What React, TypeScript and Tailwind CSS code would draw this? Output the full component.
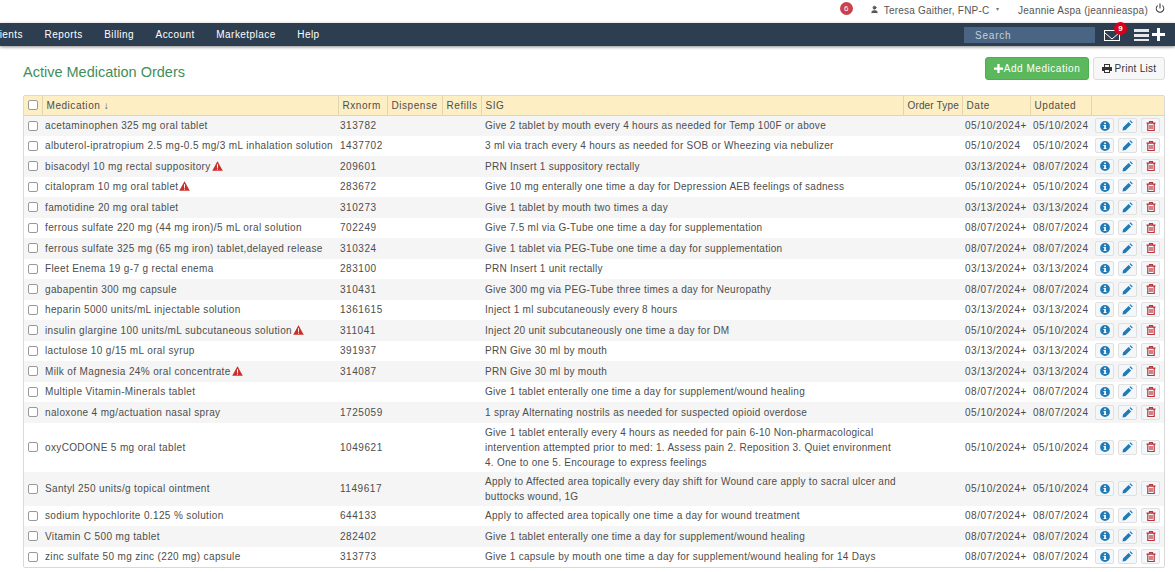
import { Power, User } from 'lucide-react'

const ROWS = [
  { name: 'acetaminophen 325 mg oral tablet', rx: '313782', sig: 'Give 2 tablet by mouth every 4 hours as needed for Temp 100F or above', date: '05/10/2024+', updated: '05/10/2024' },
  { name: 'albuterol-ipratropium 2.5 mg-0.5 mg/3 mL inhalation solution', rx: '1437702', sig: '3 ml via trach every 4 hours as needed for SOB or Wheezing via nebulizer', date: '05/10/2024', updated: '05/10/2024' },
  { name: 'bisacodyl 10 mg rectal suppository', warn: true, rx: '209601', sig: 'PRN Insert 1 suppository rectally', date: '03/13/2024+', updated: '08/07/2024' },
  { name: 'citalopram 10 mg oral tablet', warn: true, rx: '283672', sig: 'Give 10 mg enterally one time a day for Depression AEB feelings of sadness', date: '05/10/2024+', updated: '05/10/2024' },
  { name: 'famotidine 20 mg oral tablet', rx: '310273', sig: 'Give 1 tablet by mouth two times a day', date: '03/13/2024+', updated: '03/13/2024' },
  { name: 'ferrous sulfate 220 mg (44 mg iron)/5 mL oral solution', rx: '702249', sig: 'Give 7.5 ml via G-Tube one time a day for supplementation', date: '08/07/2024+', updated: '08/07/2024' },
  { name: 'ferrous sulfate 325 mg (65 mg iron) tablet,delayed release', rx: '310324', sig: 'Give 1 tablet via PEG-Tube one time a day for supplementation', date: '08/07/2024+', updated: '08/07/2024' },
  { name: 'Fleet Enema 19 g-7 g rectal enema', rx: '283100', sig: 'PRN Insert 1 unit rectally', date: '03/13/2024+', updated: '03/13/2024' },
  { name: 'gabapentin 300 mg capsule', rx: '310431', sig: 'Give 300 mg via PEG-Tube three times a day for Neuropathy', date: '08/07/2024+', updated: '08/07/2024' },
  { name: 'heparin 5000 units/mL injectable solution', rx: '1361615', sig: 'Inject 1 ml subcutaneously every 8 hours', date: '03/13/2024+', updated: '03/13/2024' },
  { name: 'insulin glargine 100 units/mL subcutaneous solution', warn: true, rx: '311041', sig: 'Inject 20 unit subcutaneously one time a day for DM', date: '05/10/2024+', updated: '05/10/2024' },
  { name: 'lactulose 10 g/15 mL oral syrup', rx: '391937', sig: 'PRN Give 30 ml by mouth', date: '03/13/2024+', updated: '03/13/2024' },
  { name: 'Milk of Magnesia 24% oral concentrate', warn: true, rx: '314087', sig: 'PRN Give 30 ml by mouth', date: '03/13/2024+', updated: '03/13/2024' },
  { name: 'Multiple Vitamin-Minerals tablet', rx: '', sig: 'Give 1 tablet enterally one time a day for supplement/wound healing', date: '08/07/2024+', updated: '08/07/2024' },
  { name: 'naloxone 4 mg/actuation nasal spray', rx: '1725059', sig: '1 spray Alternating nostrils as needed for suspected opioid overdose', date: '05/10/2024+', updated: '08/07/2024' },
  { name: 'oxyCODONE 5 mg oral tablet', rx: '1049621', sig: 'Give 1 tablet enterally every 4 hours as needed for pain 6-10 Non-pharmacological intervention attempted prior to med: 1. Assess pain 2. Reposition 3. Quiet environment 4. One to one 5. Encourage to express feelings', date: '05/10/2024+', updated: '05/10/2024' },
  { name: 'Santyl 250 units/g topical ointment', rx: '1149617', sig: 'Apply to Affected area topically every day shift for Wound care apply to sacral ulcer and buttocks wound, 1G', date: '05/10/2024+', updated: '05/10/2024' },
  { name: 'sodium hypochlorite 0.125 % solution', rx: '644133', sig: 'Apply to affected area topically one time a day for wound treatment', date: '08/07/2024+', updated: '08/07/2024' },
  { name: 'Vitamin C 500 mg tablet', rx: '282402', sig: 'Give 1 tablet enterally one time a day for supplement/wound healing', date: '08/07/2024+', updated: '08/07/2024' },
  { name: 'zinc sulfate 50 mg zinc (220 mg) capsule', rx: '313773', sig: 'Give 1 capsule by mouth one time a day for supplement/wound healing for 14 Days', date: '08/07/2024+', updated: '08/07/2024' },
]

const NAV = ['Reports', 'Billing', 'Account', 'Marketplace', 'Help']

function Check() {
  return <span className="block w-[10px] h-[10px] rounded-[2px] border border-[#999] bg-white" />
}

function Warn() {
  return (
    <svg width="11" height="10" viewBox="0 0 11 10" className="inline-block ml-[1px] align-[-1px]">
      <path d="M5.5 0.3 L10.8 9.7 H0.2 Z" fill="#c9302c" />
      <rect x="5" y="3.2" width="1" height="3.6" fill="#fff" />
      <rect x="5" y="7.6" width="1" height="1.1" fill="#fff" />
    </svg>
  )
}

function ActionBtn({ children }: { children: React.ReactNode }) {
  return (
    <span className="flex items-center justify-center w-[19px] h-[15px] rounded-[2px] border border-[#e0e0e0] bg-[#f4f7f9]">
      {children}
    </span>
  )
}

function Actions() {
  return (
    <div className="flex gap-[4px] pl-[1px]">
      <ActionBtn>
        <svg width="10" height="10" viewBox="0 0 10 10">
          <circle cx="5" cy="5" r="4.9" fill="#1f7ab5" />
          <rect x="4.2" y="1.6" width="1.7" height="1.5" fill="#fff" />
          <path d="M3.5 4h2.4v3.2h.7v.9h-3.1v-.9h.7V4.9h-.7z" fill="#fff" />
        </svg>
      </ActionBtn>
      <ActionBtn>
        <svg width="11" height="11" viewBox="0 0 11 11">
          <path d="M0.5 10.5 L1 7.5 L6.6 1.9 L9.1 4.4 L3.5 10 Z M7.5 1 L8.4 0.3 L10.7 2.6 L10 3.5 Z" fill="#1f7ab5" />
        </svg>
      </ActionBtn>
      <ActionBtn>
        <svg width="10" height="10" viewBox="0 0 10 10" fill="none" stroke="#b8333a" strokeWidth="1.2">
          <path d="M0.5 2.2h9M3.5 2V.7h3V2M1.8 2.5v7h6.4v-7M4 4v4M6 4v4" />
        </svg>
      </ActionBtn>
    </div>
  )
}

export default function App() {
  return (
    <div className="w-[1175px] h-[572px] overflow-hidden bg-white font-['Liberation_Sans',Arial,sans-serif] text-[10px] tracking-[0.55px] text-[#4d4d4d]">
      {/* Top bar */}
      <div className="h-[23px] flex items-start pt-[2px] justify-end text-[#555]">
        <span className="flex items-center justify-center w-[13px] h-[13px] rounded-full bg-[#c9424f] text-white text-[8px] tracking-normal mr-[17px]">6</span>
        <User size={9} fill="#555" className="mr-[5px] mt-[3px]" />
        <span className="tracking-[0.22px] mt-[1px]">Teresa Gaither, FNP-C</span>
        <span className="ml-[6px] mr-[19px] mt-[3px] text-[6px] text-[#777]">▾</span>
        <span className="mt-[1px] tracking-[0.25px]">Jeannie Aspa (jeannieaspa)</span>
        <Power size={10} strokeWidth={2.5} className="ml-[7px] mr-[10px] mt-[1px] text-[#333]" />
      </div>

      {/* Nav */}
      <div className="h-[23px] flex items-center bg-[#2c3e50] text-white shadow-[0_1px_3px_rgba(0,0,0,0.45)] relative tracking-[0.45px]">
        <span className="w-[23px] overflow-hidden flex justify-end shrink-0">ients</span>
        {NAV.map((n) => (
          <span key={n} className="ml-[21.5px]">{n}</span>
        ))}
        <div className="ml-auto flex items-center">
          <div className="w-[131px] h-[16px] mt-[1px] bg-[#4a6583] text-[#c4d0dc] pl-[11px] flex items-center tracking-[0.8px]">Search</div>
          <div className="relative ml-[9px] mt-[2px] w-[16px] h-[11px] border border-white bg-[#2c3e50]">
            <svg width="14" height="9" viewBox="0 0 14 9" className="block"><path d="M0 2 L7 8 L14 2" fill="none" stroke="#fff" /></svg>
            <span className="absolute -top-[9px] left-[9px] flex items-center justify-center w-[13px] h-[13px] rounded-full bg-[#d9001b] text-white text-[8px] font-bold tracking-normal">9</span>
          </div>
          <div className="ml-[14px] flex flex-col gap-[2px]">
            <span className="block w-[15px] h-[3px] bg-[#e8e8e8]" />
            <span className="block w-[15px] h-[3px] bg-[#e8e8e8]" />
            <span className="block w-[15px] h-[2px] bg-[#e8e8e8]" />
          </div>
          <svg width="13" height="13" viewBox="0 0 13 13" className="ml-[3px] mr-[10px]"><path d="M5 0h3v5h5v3H8v5H5V8H0V5h5z" fill="#fff" /></svg>
        </div>
      </div>

      {/* Heading */}
      <div className="h-[49px] flex items-center pl-[23px] pr-[10px]">
        <h1 className="text-[14.5px] tracking-normal font-normal text-[#3f8f5a] mt-[5px]">Active Medication Orders</h1>
        <div className="ml-auto flex gap-[4px] mb-[4px]">
          <div className="h-[23px] w-[104px] flex items-center justify-center rounded-[3px] bg-[#5cb85c] border border-[#4cae4c] text-white tracking-[0.55px]">
            <svg width="9" height="9" viewBox="0 0 8 8" className="mr-[1px]"><path d="M3 0h2v3h3v2H5v3H3V5H0V3h3z" fill="#fff" /></svg>
            Add Medication
          </div>
          <div className="h-[23px] w-[72px] flex items-center justify-center rounded-[3px] bg-[#f7f7f7] border border-[#ddd] text-[#333] tracking-[0.3px]">
            <svg width="10" height="9" viewBox="0 0 10 9" className="mr-[3px]"><path d="M2 0h6v3h2v4H8v2H2V7H0V3h2zM3 1v2h4V1zM3 6v2h4V6z" fill="#333" fillRule="evenodd" /></svg>
            Print List
          </div>
        </div>
      </div>

      {/* Table */}
      <div className="ml-[23px] mr-[10px] border border-[#d9d9d9] rounded-[2px]">
        <table className="w-full table-fixed border-collapse">
          <colgroup>
            <col className="w-[18px]" />
            <col className="w-[296px]" />
            <col className="w-[49px]" />
            <col className="w-[55px]" />
            <col className="w-[39px]" />
            <col className="w-[422px]" />
            <col className="w-[59px]" />
            <col className="w-[68px]" />
            <col className="w-[61px]" />
            <col />
          </colgroup>
          <thead>
            <tr className="h-[19px] bg-[#fdeec3] text-left">
              <th className="font-normal pl-[4px] border-r border-[#e3d5ae] border-b"><Check /></th>
              {['Medication ↓', 'Rxnorm', 'Dispense', 'Refills', 'SIG', 'Order Type', 'Date', 'Updated', ''].map((h) => (
                <th key={h} className={h === 'Order Type' ? 'font-normal pl-[4px] border-r border-b border-[#e3d5ae] whitespace-nowrap overflow-hidden tracking-[0.15px]' : 'font-normal pl-[4px] border-r last:border-r-0 border-b border-[#e3d5ae] whitespace-nowrap overflow-hidden'}>{h}</th>
              ))}
            </tr>
          </thead>
          <tbody>
            {ROWS.map((r) => (
              <tr key={r.name} className="h-[20.5px] odd:bg-[#f5f5f5] even:bg-white">
                <td className="pl-[4px]"><Check /></td>
                <td className="pl-[3px] whitespace-nowrap tracking-[0.36px]">
                  {r.name}
                  {r.warn && <Warn />}
                </td>
                <td className="pl-[2px]">{r.rx}</td>
                <td />
                <td />
                <td className="pl-[4px] pr-[5px] py-[2px] leading-[15px] tracking-[0.28px]">{r.sig}</td>
                <td />
                <td className="pl-[3px] whitespace-nowrap">{r.date}</td>
                <td className="pl-[3px]">{r.updated}</td>
                <td className="pl-[3px]"><Actions /></td>
              </tr>
            ))}
          </tbody>
        </table>
      </div>
    </div>
  )
}
